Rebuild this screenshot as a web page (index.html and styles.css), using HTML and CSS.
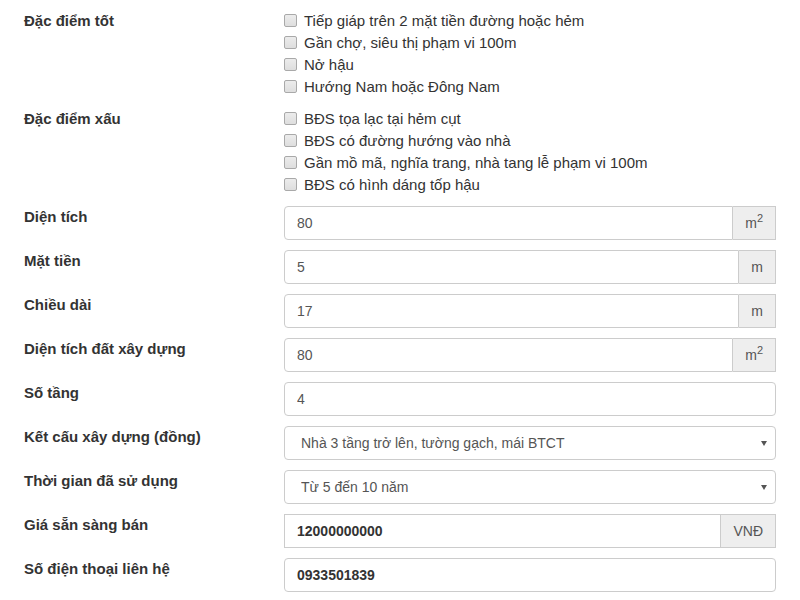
FILE: index.html
```html
<!DOCTYPE html>
<html>
<head>
  <title>Thông tin bất động sản</title>
  <link rel="stylesheet" href="styles.css">
</head>
<body>
  <form class="form">

    <!-- checkbox groups -->
    <div class="form-group">
      <label class="label label-check">Đặc điểm tốt</label>
      <div class="checks">
        <label class="check"><span class="box"></span>Tiếp giáp trên 2 mặt tiền đường hoặc hẻm</label>
        <label class="check"><span class="box"></span>Gần chợ, siêu thị phạm vi 100m</label>
        <label class="check"><span class="box"></span>Nở hậu</label>
        <label class="check"><span class="box"></span>Hướng Nam hoặc Đông Nam</label>
      </div>
    </div>

    <div class="form-group">
      <label class="label label-check">Đặc điểm xấu</label>
      <div class="checks">
        <label class="check"><span class="box"></span>BĐS tọa lạc tại hẻm cụt</label>
        <label class="check"><span class="box"></span>BĐS có đường hướng vào nhà</label>
        <label class="check"><span class="box"></span>Gần mồ mã, nghĩa trang, nhà tang lễ phạm vi 100m</label>
        <label class="check"><span class="box"></span>BĐS có hình dáng tốp hậu</label>
      </div>
    </div>

    <!-- inputs -->
    <div class="form-group">
      <label class="label">Diện tích</label>
      <div class="input-group">
        <input class="input" type="text" value="80">
        <span class="addon">m<sup>2</sup></span>
      </div>
    </div>

    <div class="form-group">
      <label class="label">Mặt tiền</label>
      <div class="input-group">
        <input class="input" type="text" value="5">
        <span class="addon">m</span>
      </div>
    </div>

    <div class="form-group">
      <label class="label">Chiều dài</label>
      <div class="input-group">
        <input class="input" type="text" value="17">
        <span class="addon">m</span>
      </div>
    </div>

    <div class="form-group">
      <label class="label">Diện tích đất xây dựng</label>
      <div class="input-group">
        <input class="input" type="text" value="80">
        <span class="addon">m<sup>2</sup></span>
      </div>
    </div>

    <div class="form-group">
      <label class="label">Số tầng</label>
      <input class="input" type="text" value="4">
    </div>

    <div class="form-group">
      <label class="label">Kết cấu xây dựng (đồng)</label>
      <div class="select-wrap">
        <select class="select">
          <option>Nhà 3 tầng trở lên, tường gạch, mái BTCT</option>
        </select>
      </div>
    </div>

    <div class="form-group">
      <label class="label">Thời gian đã sử dụng</label>
      <div class="select-wrap">
        <select class="select">
          <option>Từ 5 đến 10 năm</option>
        </select>
      </div>
    </div>

    <div class="form-group">
      <label class="label">Giá sẵn sàng bán</label>
      <div class="input-group">
        <input class="input input-bold input-square" type="text" value="12000000000">
        <span class="addon">VNĐ</span>
      </div>
    </div>

    <div class="form-group">
      <label class="label">Số điện thoại liên hệ</label>
      <input class="input input-bold" type="text" value="0933501839">
    </div>

  </form>
</body>
</html>
```

FILE: styles.css
```css
body {
  margin: 0;
  background-color: #fff;
  font-family: "Liberation Sans", Arial, sans-serif;
  font-size: 14px;
  color: #333;
  overflow: hidden;
}

.form {
  padding: 10px 24px 0 24px;
}

.form-group {
  display: grid;
  grid-template-columns: 260px 1fr;
  margin-bottom: 10px;
}

/* Labels */
.label {
  font-size: 15px;
  font-weight: bold;
  line-height: 20px;
  padding-top: 1px;
}

.label-check {
  line-height: 22px;
  padding-top: 0;
}

/* Checkbox list */
.check {
  display: flex;
  align-items: flex-start;
  font-size: 15px;
  line-height: 22px;
  height: 22px;
}

.box {
  width: 11px;
  height: 11px;
  margin-top: 4px;
  margin-right: 7px;
  border: 1px solid #a9a9a9;
  border-radius: 2px;
  background: linear-gradient(#ececec, #dedede);
  flex-shrink: 0;
}

/* Inputs */
.input {
  box-sizing: border-box;
  width: 100%;
  height: 34px;
  padding: 6px 12px;
  font-family: inherit;
  font-size: 14px;
  color: #555;
  border: 1px solid #ccc;
  border-radius: 4px;
  background: #fff;
  outline: none;
}

.input-bold {
  font-weight: bold;
  color: #333;
}

.input-group {
  display: flex;
}

.input-group .input {
  border-top-right-radius: 0;
  border-bottom-right-radius: 0;
  flex: 1;
}

.input-group .input-square {
  border-radius: 0;
}

.addon {
  box-sizing: border-box;
  height: 34px;
  padding: 6px 12px;
  line-height: 20px;
  color: #555;
  background: #eee;
  border: 1px solid #ccc;
  border-left: 0;
  white-space: nowrap;
}

.addon sup {
  font-size: 11px;
  line-height: 0;
  vertical-align: 6px;
}

/* Selects */
.select-wrap {
  position: relative;
}

.select-wrap::after {
  content: "";
  position: absolute;
  right: 9px;
  top: 15px;
  border-left: 3px solid transparent;
  border-right: 3px solid transparent;
  border-top: 5px solid #555;
}

.select {
  box-sizing: border-box;
  width: 100%;
  height: 34px;
  padding: 6px 12px 6px 16px;
  font-family: inherit;
  font-size: 14px;
  color: #555;
  border: 1px solid #ccc;
  border-radius: 4px;
  background: #fff;
  appearance: none;
  -webkit-appearance: none;
  outline: none;
}
```
